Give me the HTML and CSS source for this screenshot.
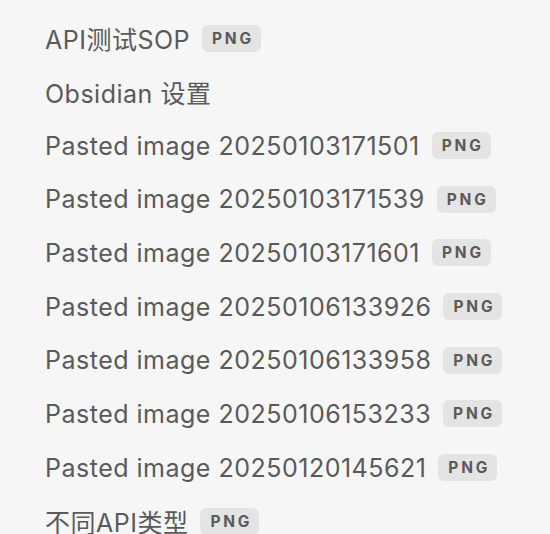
FILE: index.html
```html
<!DOCTYPE html>
<html lang="zh">
<head>
<meta charset="utf-8">
<link rel="stylesheet" href="styles.css">
</head>
<body>
<ul class="files">
  <li class="file"><span class="name">API测试SOP</span><span class="badge">PNG</span></li>
  <li class="file"><span class="name">Obsidian 设置</span></li>
  <li class="file"><span class="name">Pasted image 20250103171501</span><span class="badge">PNG</span></li>
  <li class="file"><span class="name">Pasted image 20250103171539</span><span class="badge">PNG</span></li>
  <li class="file"><span class="name">Pasted image 20250103171601</span><span class="badge">PNG</span></li>
  <li class="file"><span class="name">Pasted image 20250106133926</span><span class="badge">PNG</span></li>
  <li class="file"><span class="name">Pasted image 20250106133958</span><span class="badge">PNG</span></li>
  <li class="file"><span class="name">Pasted image 20250106153233</span><span class="badge">PNG</span></li>
  <li class="file"><span class="name">Pasted image 20250120145621</span><span class="badge">PNG</span></li>
  <li class="file"><span class="name">不同API类型</span><span class="badge">PNG</span></li>
</ul>
</body>
</html>
```
FILE: styles.css
```css
html, body {
  margin: 0;
  padding: 0;
  background: #f6f6f6;
  height: 100%;
  overflow: hidden;
}
.files {
  list-style: none;
  margin: 0;
  padding: 11.5px 0 0 45px;
}
.file {
  display: flex;
  align-items: center;
  height: 53.67px;
  gap: 12px;
  font-family: Inter, "Noto Sans CJK SC", sans-serif;
  font-size: 25px;
  letter-spacing: 0.5px;
  color: #5a5a5a;
  white-space: nowrap;
}
.badge {
  display: inline-flex;
  align-items: center;
  justify-content: center;
  width: 59px;
  height: 27px;
  border-radius: 6px;
  background: #e4e4e4;
  color: #5a5a5a;
  font-family: Inter, sans-serif;
  font-weight: 700;
  font-size: 15.5px;
  letter-spacing: 2.8px;
  box-sizing: border-box;
  padding-left: 2.8px;
}
```
